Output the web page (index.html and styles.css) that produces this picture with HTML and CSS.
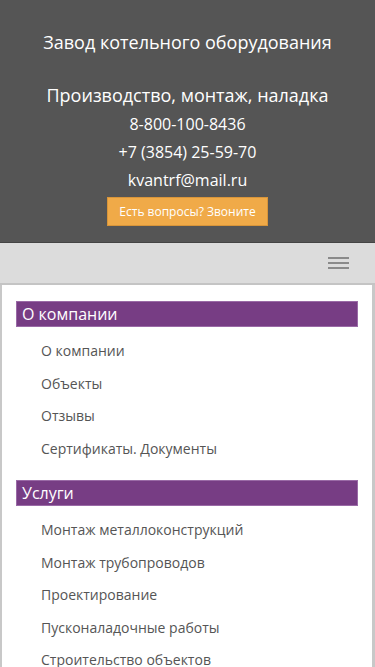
FILE: index.html
```html
<!DOCTYPE html>
<html lang="ru">
<head>
    <meta charset="UTF-8">
    <meta name="viewport" content="width=device-width, initial-scale=1.0">
    <title>Завод котельного оборудования</title>
    <link rel="stylesheet" href="styles.css">
</head>
<body>
    <header class="header">
        <div class="site-name">Завод котельного оборудования</div>
        <div class="slogan">Производство, монтаж, наладка</div>
        <div class="contacts">
            <a href="#">8-800-100-8436</a>
            <a href="#">+7 (3854) 25-59-70</a>
            <a href="#">kvantrf@mail.ru</a>
        </div>
        <button class="call-button">Есть вопросы? Звоните</button>
    </header>

    <div class="nav-bar">
        <button class="menu-toggle" aria-label="Меню">
            <span></span><span></span><span></span>
        </button>
    </div>

    <div class="content">
        <div class="menu-block">
            <h2 class="menu-title">О компании</h2>
            <ul class="menu-list">
                <li><a href="#">О компании</a></li>
                <li><a href="#">Объекты</a></li>
                <li><a href="#">Отзывы</a></li>
                <li><a href="#">Сертификаты. Документы</a></li>
            </ul>
        </div>
        <div class="menu-block">
            <h2 class="menu-title">Услуги</h2>
            <ul class="menu-list">
                <li><a href="#">Монтаж металлоконструкций</a></li>
                <li><a href="#">Монтаж трубопроводов</a></li>
                <li><a href="#">Проектирование</a></li>
                <li><a href="#">Пусконаладочные работы</a></li>
                <li><a href="#">Строительство объектов</a></li>
            </ul>
        </div>
    </div>
</body>
</html>
```

FILE: styles.css
```css
body {
    margin: 0;
    font-family: "Open Sans", "Noto Sans", sans-serif;
    color: #555;
    background: #fff;
}
a {
    color: inherit;
    text-decoration: none;
}
.header {
    background-color: #555;
    color: #fff;
    text-align: center;
    padding: 30px 10px 16px;
    border-bottom: 1px solid #444;
}
.site-name {
    font-size: 18px;
    line-height: 24px;
}
.slogan {
    font-size: 18px;
    line-height: 24px;
    margin-top: 29px;
}
.contacts a {
    display: block;
    font-size: 16px;
    line-height: 28px;
}
.contacts {
    margin-top: 3px;
}
.call-button {
    margin-top: 3px;
    padding: 0 11px;
    height: 29px;
    background-color: #f0aa48;
    border: 1px solid #d8953a;
    color: #fff;
    font-family: inherit;
    font-size: 12px;
    cursor: pointer;
}
.nav-bar {
    background-color: #dcdcdc;
    height: 40px;
    border-bottom: 2px solid #c4c4c4;
    display: flex;
    justify-content: flex-end;
    align-items: center;
    padding-right: 26px;
}
.menu-toggle {
    background: none;
    border: none;
    padding: 0;
    width: 21px;
    display: flex;
    flex-direction: column;
    gap: 3px;
    cursor: pointer;
}
.menu-toggle span {
    display: block;
    height: 2px;
    background-color: #8a8a8a;
}
.content {
    border-left: 2px solid #c8c8c8;
    border-right: 3px solid #c8c8c8;
    padding: 16px 14px 0;
}
.menu-block {
    margin-bottom: 15px;
}
.menu-title {
    margin: 0;
    background-color: #773d84;
    border: 1px solid #9a6aa6;
    color: #fff;
    font-size: 16px;
    font-weight: normal;
    line-height: 24px;
    padding: 0 5px;
}
.menu-list {
    list-style: none;
    margin: 0;
    padding: 8px 0 0 25px;
}
.menu-list li {
    font-size: 14px;
    line-height: 32.5px;
}
```
